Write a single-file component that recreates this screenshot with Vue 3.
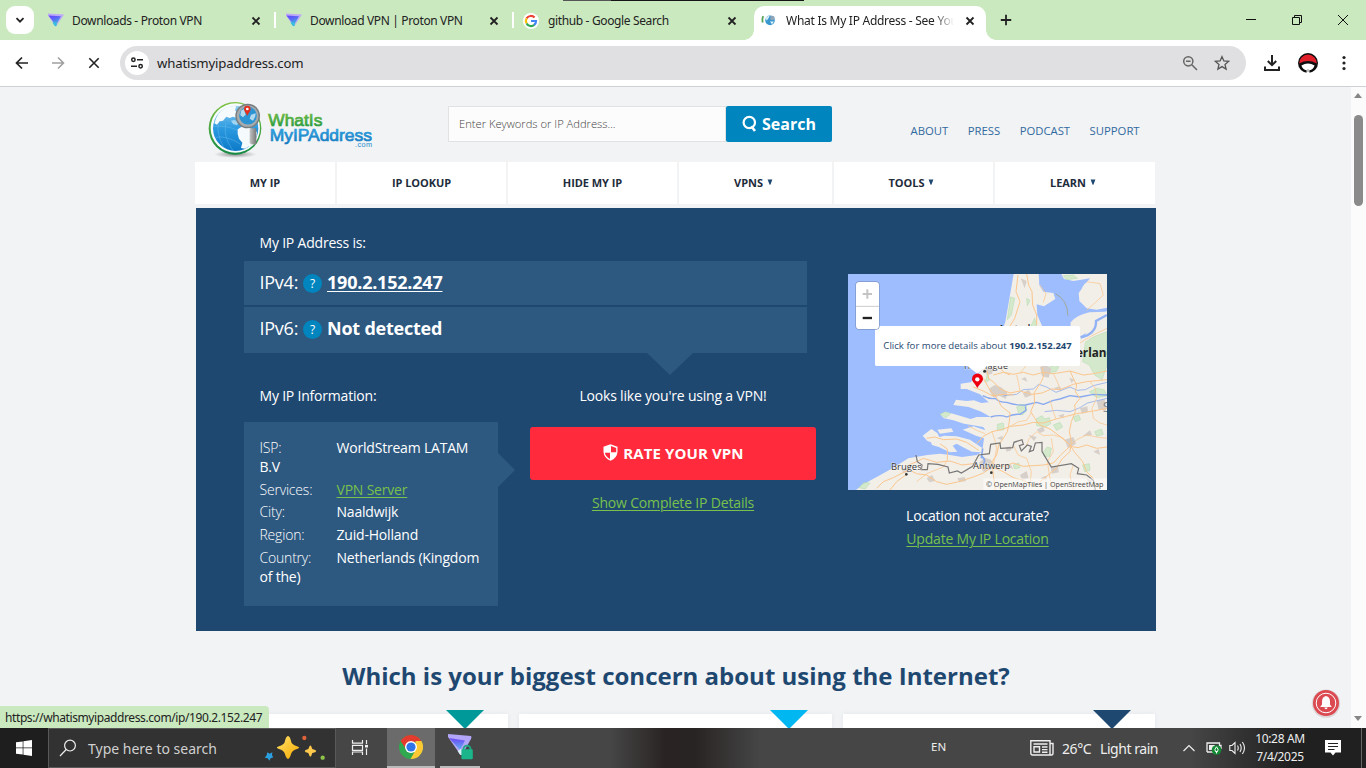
<script setup>
const tabs = [
  { title: 'Downloads - Proton VPN', icon: 'proton', sep: true },
  { title: 'Download VPN | Proton VPN', icon: 'proton', sep: true },
  { title: 'github - Google Search', icon: 'google' },
  { title: 'What Is My IP Address - See You', icon: 'globe', active: true },
]
const nav = [
  { label: 'MY IP' },
  { label: 'IP LOOKUP' },
  { label: 'HIDE MY IP' },
  { label: 'VPNS', menu: true },
  { label: 'TOOLS', menu: true },
  { label: 'LEARN', menu: true },
]
const links = ['ABOUT', 'PRESS', 'PODCAST', 'SUPPORT']
const info = [
  { key: 'ISP:', value: 'WorldStream LATAM B.V' },
  { key: 'Services:', value: 'VPN Server', link: true },
  { key: 'City:', value: 'Naaldwijk' },
  { key: 'Region:', value: 'Zuid-Holland' },
  { key: 'Country:', value: 'Netherlands (Kingdom of the)' },
]
const cards = ['teal', 'sky', 'navy']
</script>

<template>
  <div class="screen">
    <div class="tabstrip">
      <div class="edge-line"></div>
      <button class="tab-search">
        <svg width="10" height="10" viewBox="0 0 10 10"><path d="M1.5 3.2 5 6.7 8.5 3.2" fill="none" stroke="#222" stroke-width="1.8" /></svg>
      </button>
      <div v-for="t in tabs" :key="t.title" class="tab" :class="{ active: t.active, sep: t.sep }">
        <svg v-if="t.icon === 'proton'" class="fav" viewBox="0 0 16 16">
          <defs>
            <linearGradient id="pv" x1="0" y1="0" x2="0.5" y2="1"><stop offset="0" stop-color="#6440fb" /><stop offset=".5" stop-color="#5a6cf5" /><stop offset="1" stop-color="#2fc6d4" /></linearGradient>
          </defs>
          <path d="M1 .4 17 1.4 9.5 12.8Q8.5 13.8 7.8 12.6L1 2.4Z" fill="#bda9f7" />
          <path d="M1.5 2.6 14 3.2 8.8 12Z" fill="url(#pv)" />
          <path d="M8.2 9 10 12Q8.5 14.4 7.4 12.6L5.4 9.4Z" fill="#35bfe0" />
        </svg>
        <svg v-else-if="t.icon === 'google'" class="fav" viewBox="0 0 16 16">
          <circle cx="8" cy="8" r="8" fill="#fff" />
          <path d="M3.6 5.4A5 5 0 0 1 11.6 4.6" fill="none" stroke="#ea4335" stroke-width="2.2" />
          <path d="M3.6 10.5A5 5 0 0 1 3.6 5.4" fill="none" stroke="#fbbc05" stroke-width="2.2" />
          <path d="M11.4 11.8A5 5 0 0 1 3.6 10.4" fill="none" stroke="#34a853" stroke-width="2.2" />
          <path d="M8 8H13A5 5 0 0 1 11.2 11.9" fill="none" stroke="#4285f4" stroke-width="2.2" />
        </svg>
        <svg v-else class="fav" viewBox="0 0 16 16">
          <path d="M2.2 3.2Q.8 6.5 1.8 9.5" fill="none" stroke="#59a557" stroke-width="1.8" />
          <circle cx="9" cy="7.4" r="4.8" fill="#3b98cf" />
          <path d="M4.4 5 7.6 2.8 8.6 3.5 6.6 6.5 5.6 7.5Z" fill="#d8ecf7" />
          <circle cx="11.4" cy="5" r="2.3" fill="#8ea6b8" />
          <path d="M9 8.4 12.8 8.4 11 11.2Z" fill="#e4f2fa" />
        </svg>
        <span class="tab-title">{{ t.title }}</span>
        <svg class="tab-x" width="16" height="16" viewBox="0 0 16 16"><path d="M4.5 4.5 11.5 11.5M11.5 4.5 4.5 11.5" stroke="#222" stroke-width="1.8" /></svg>
      </div>
      <svg class="plus" width="12" height="12" viewBox="0 0 12 12"><path d="M6 .8V11.2M.8 6H11.2" stroke="#222" stroke-width="1.8" /></svg>
      <div class="win">
        <svg width="12" height="12" viewBox="0 0 12 12"><path d="M1 5.5H11" stroke="#111" /></svg>
        <svg width="12" height="12" viewBox="0 0 12 12"><path d="M1.5 3.5H8.5V10.5H1.5ZM3.5 3.5V1.5H10.5V8.5H8.5" fill="none" stroke="#111" /></svg>
        <svg width="12" height="12" viewBox="0 0 12 12"><path d="M1 1 11 11M11 1 1 11" stroke="#111" /></svg>
      </div>
    </div>

    <div class="toolbar">
      <svg class="back" width="14" height="14" viewBox="0 0 14 14"><path d="M13 7H1.8M7 1.5 1.5 7 7 12.5" fill="none" stroke="#222" stroke-width="1.7" /></svg>
      <svg class="fwd" width="14" height="14" viewBox="0 0 14 14"><path d="M1 7H12.2M7 1.5 12.5 7 7 12.5" fill="none" stroke="#a0a0a0" stroke-width="1.6" /></svg>
      <svg class="stop" width="12" height="12" viewBox="0 0 12 12"><path d="M1.3 1.3 10.7 10.7M10.7 1.3 1.3 10.7" stroke="#222" stroke-width="1.6" /></svg>
      <div class="omnibox">
        <span class="site">
          <svg width="14" height="14" viewBox="0 0 14 14" fill="none" stroke="#222" stroke-width="1.5"><circle cx="3.4" cy="3.8" r="1.7" /><path d="M7 3.8H13M1 10.2H7" /><circle cx="10.6" cy="10.2" r="1.7" /></svg>
        </span>
        <span class="url">whatismyipaddress.com</span>
        <svg class="mag" width="16" height="16" viewBox="0 0 16 16" fill="none" stroke="#666" stroke-width="1.5"><circle cx="6.3" cy="6.3" r="4.6" /><path d="M9.8 9.8 15 15M4 6.3H8.6" /></svg>
        <svg class="star" width="16" height="16" viewBox="0 0 16 16"><path d="M8 1.7 9.9 6 14.6 6.4 11 9.5 12.1 14.1 8 11.6 3.9 14.1 5 9.5 1.4 6.4 6.1 6Z" fill="none" stroke="#555" stroke-width="1.3" /></svg>
      </div>
      <svg class="dl" width="18" height="18" viewBox="0 0 18 18" fill="none" stroke="#222" stroke-width="2"><path d="M9 1V11M4.8 7 9 11.2 13.2 7M2 12.5V16H16V12.5" /></svg>
      <svg class="avatar" width="20" height="20" viewBox="0 0 20 20">
        <circle cx="10" cy="10" r="10" fill="#0e0e10" />
        <path d="M1.2 10.4A8.8 8.8 0 0 1 18.8 10.4Q10 5.6 1.2 10.4Z" fill="#e01f2b" />
        <path d="M3.4 12.4Q10 8.4 16.6 12.4A7 7 0 0 1 11.4 17.2V20H8.6V17.2A7 7 0 0 1 3.4 12.4Z" fill="#fff" />
        <path d="M10 16.2V19" stroke="#0e0e10" stroke-width=".5" />
      </svg>
      <svg class="dots" width="4" height="16" viewBox="0 0 4 16" fill="#222"><circle cx="2" cy="2.5" r="1.6" /><circle cx="2" cy="8" r="1.6" /><circle cx="2" cy="13.5" r="1.6" /></svg>
    </div>

    <div class="viewport">
      <div class="page">
        <header class="head">
          <svg class="logo" width="170" height="60" viewBox="50 30 510 180">
            <defs>
              <linearGradient id="ring" x1="0" y1="0" x2="0" y2="1"><stop offset="0" stop-color="#7fc243" /><stop offset="1" stop-color="#168a43" /></linearGradient>
              <linearGradient id="sea" x1="0" y1="0" x2="0" y2="1"><stop offset="0" stop-color="#8fcdf2" /><stop offset=".5" stop-color="#2b9ae0" /><stop offset="1" stop-color="#0d7ac8" /></linearGradient>
              <linearGradient id="gt" x1="0" y1="0" x2="0" y2="1"><stop offset="0" stop-color="#7cc043" /><stop offset="1" stop-color="#14923e" /></linearGradient>
              <linearGradient id="bt" x1="0" y1="0" x2="0" y2="1"><stop offset="0" stop-color="#37a9e4" /><stop offset="1" stop-color="#1277bf" /></linearGradient>
              <linearGradient id="handle" x1="0" y1="0" x2="1" y2="0"><stop offset="0" stop-color="#c4c4c4" /><stop offset="1" stop-color="#777" /></linearGradient>
              <radialGradient id="shade"><stop offset="0" stop-color="#888" /><stop offset="1" stop-color="#999" stop-opacity="0" /></radialGradient>
            </defs>
            <ellipse cx="135" cy="193" rx="64" ry="11" fill="url(#shade)" />
            <circle cx="134" cy="115" r="79" fill="url(#ring)" />
            <circle cx="135" cy="114" r="74" fill="#f7fbfd" />
            <circle cx="136" cy="115" r="68" fill="url(#sea)" />
            <path d="M84 72Q98 54 120 49L138 48 134 60 142 72 140 84 128 80 118 84 108 80 98 92 88 94 80 104 72 100Q76 84 84 72Z" fill="#f5fafd" />
            <path d="M122 92 132 90 146 96 140 106 128 102Z" fill="#9ed4f4" />
            <path d="M142 118 154 110 178 114 200 126Q200 152 182 166L164 176 152 174 156 158 146 146 142 132Z" fill="#f5fafd" />
            <path d="M72 110Q100 104 140 120M84 100Q78 130 100 172M106 100Q98 140 128 182M76 142Q110 136 150 162" fill="none" stroke="#6fbdec" stroke-width="1.3" />
            <circle cx="172" cy="78" r="37" fill="#777d80" /><circle cx="172" cy="78" r="32.5" fill="#a6abad" /><circle cx="173" cy="77" r="26.5" fill="#2c94d3" />
            <path d="M152 62 162 56 166 74 158 82 150 76ZM182 74 196 70Q196 84 188 92L178 86Z" fill="#b3d9ef" />
            <path d="M171 77C165 66 161 63 161 57A10 10 0 0 1 181 57C181 63 176 67 171 77Z" fill="#e2301e" /><circle cx="171" cy="57" r="4" fill="#fff" />
            <path d="M178 115H198V162Q188 166 178 160Z" fill="url(#handle)" />
            <text x="234" y="109" textLength="162" lengthAdjust="spacingAndGlyphs" font-size="52" fill="url(#gt)" stroke="url(#gt)" stroke-width="2.2" class="brand">WhatIs</text>
            <text x="238" y="153" textLength="307" lengthAdjust="spacingAndGlyphs" font-size="52" fill="url(#bt)" stroke="url(#bt)" stroke-width="2.2" class="brand">MyIPAddress</text>
            <text x="494" y="171" textLength="51" font-size="22" fill="#258bcb" class="brand">.com</text>
          </svg>
          <div class="search">
            <div class="field">Enter Keywords or IP Address...</div>
            <button class="go">
              <svg width="15" height="18" viewBox="0 0 15 18"><circle cx="7.3" cy="7.5" r="5.7" fill="none" stroke="#fff" stroke-width="2.2" /><path d="M9.3 11.2 13 16" stroke="#fff" stroke-width="2.6" /></svg>
              <span>Search</span>
            </button>
          </div>
          <div class="links"><a v-for="l in links" :key="l">{{ l }}</a></div>
        </header>

        <nav class="nav">
          <div v-for="n in nav" :key="n.label" class="nav-item"><span>{{ n.label }}</span><svg v-if="n.menu" width="6" height="6" viewBox="0 0 6 6"><path d="M.6.4H5.4L3.4 5.8H2.6Z" fill="#1f4871" /></svg></div>
        </nav>

        <section class="hero">
          <div class="left">
            <p class="label">My IP Address is:</p>
            <div class="bar"><span class="ver">IPv4:</span><i class="help">?</i><b class="ip v4">190.2.152.247</b></div>
            <div class="bar second"><span class="ver">IPv6:</span><i class="help">?</i><b class="ip">Not detected</b></div>
            <div class="lower">
              <div class="col-info">
                <p class="label">My IP Information:</p>
                <div class="info">
                  <p v-for="r in info" :key="r.key"><span class="key">{{ r.key }}</span><span :class="{ lnk: r.link }">{{ r.value }}</span></p>
                </div>
              </div>
              <div class="col-vpn">
                <p class="looks">Looks like you're using a VPN!</p>
                <button class="rate">
                  <svg width="15" height="17" viewBox="0 0 15 17"><path d="M7.5.3 14.5 2.8V8Q14 14 7.5 16.8Q1 14 .5 8V2.8Z" fill="#fff" /><path d="M8 2 13.2 3.9V8.2H8ZM7 8.7V15Q2.6 12.8 1.9 8.7Z" fill="#ff2b3c" /></svg>
                  <span>RATE YOUR VPN</span>
                </button>
                <a class="lnk details">Show Complete IP Details</a>
              </div>
            </div>
          </div>

          <div class="right">
            <svg class="map" width="259" height="216" viewBox="24 27 777 648">
              <rect x="24" y="27" width="777" height="648" fill="#9dbdff" />
              <path d="M521 27H801V675H48L66 660 110 636 160 608 205 580 262 570 300 566 330 570 366 576 410 570 424 562 396 560 372 548 350 536 338 542 352 560 330 562 296 546 276 540 270 524 312 512 350 514 390 524 428 550 432 520 408 512 368 494 400 484 436 496 430 486 372 476 340 466 312 460 300 448 316 440 352 450 392 462 410 456 452 456 424 440 386 426 340 420 348 404 380 408 402 406 424 414 446 412 420 388 380 372 362 372 362 356 392 352 430 310 472 240 496 170 510 90Z" fill="#f2eee8" />
              <path d="M248 512 274 492 292 504 300 520 280 534 262 528ZM292 494 334 490 340 500 300 506Z" fill="#f2eee8" />
              <path d="M596 27H664L672 42 700 48 724 44 750 40 732 62 716 84 718 108 740 130 770 134 801 128V138L770 150 744 196 730 218 700 206 640 204 606 182 592 150 590 118 612 124 646 102 640 84 610 80 598 60Z" fill="#9dbdff" />
              <path d="M722 80Q730 50 756 46L801 50V122L762 126 730 116ZM692 172Q710 150 748 142L796 140 768 166 746 200 716 216 690 204Z" fill="#f2eee8" />
              <path d="M722 218Q770 206 768 168L801 150" fill="none" stroke="#92b2f6" stroke-width="7" />
              <path d="M646 86Q682 104 684 152" fill="none" stroke="#a3a898" stroke-width="3" />
              <g fill="#cde9c6" stroke="#9bd49a" stroke-width="1.5" opacity=".8">
                <path d="M512 96 524 100 514 150 502 164ZM500 200 516 186 508 240 496 270ZM736 232 760 216 801 200V300L786 344 764 330 748 300 728 290ZM620 310 644 300 656 306 648 320 630 322ZM588 462 606 452 614 462 628 458 632 476 616 486 590 482ZM530 426 540 418 558 420 560 436 548 450 536 444ZM610 560 622 546 634 550 630 574 612 574ZM748 380 770 370 792 374 801 392 770 398ZM442 326 448 346 436 352ZM728 600 748 596 750 616 734 620ZM472 478 490 474 492 494 472 496ZM572 184 584 160 590 184ZM300 448 316 440 332 446 318 458ZM56 668 72 652 90 654 76 672ZM670 32 700 30 712 40 680 44ZM560 100 570 106 562 122ZM640 480 660 472 668 486 650 496ZM700 456 716 450 722 464 706 470ZM520 600 536 594 540 608 524 612ZM764 500 784 492 790 508 770 514Z" />
              </g>
              <g fill="#d7cfc9">
                <path d="M446 372 464 360 482 366 502 382 498 402 478 392 460 398ZM436 310 462 306 456 326 440 330ZM560 268 590 256 600 280 570 290ZM600 306 618 298 634 312 626 338 606 334ZM416 594 434 578 452 584 472 606 450 614 430 620ZM548 384 566 374 576 390 556 398ZM674 524 700 516 708 536 684 550ZM590 494 610 484 614 498 600 504ZM542 40 560 48 554 70ZM728 514 750 496 756 510ZM770 408 794 402 798 436 776 434ZM632 606 654 602 656 622 636 626ZM540 630 560 618 566 640 546 644ZM184 612 212 604 214 620 190 624ZM260 640 276 630 286 648 268 652ZM720 430 742 424 744 440 726 446Z" />
                <path d="M496 548 512 544 514 556 500 560ZM470 520 488 512 488 526ZM566 510 590 516 582 528ZM352 640 374 636 378 648 358 652ZM640 370 660 364 666 378ZM688 338 704 344 694 354ZM600 640 618 632 620 644ZM498 604 512 598 520 612ZM654 452 672 446 670 460ZM760 560 776 552 780 570ZM544 342 556 336 562 350ZM740 640 758 648 748 658Z" />
              </g>
              <g fill="none" stroke="#88a9ef" stroke-width="4" stroke-linejoin="round">
                <path d="M428 392Q450 404 466 400 476 412 500 412 530 422 556 420L590 412 610 418 640 406 660 402 690 392 720 396 760 388 801 390M452 456Q480 448 500 456 520 446 540 448L558 436 556 424" />
                <path d="M490 392 530 388 550 374 580 372 596 358 620 366 648 382 690 366 712 376 736 374 760 362 801 352M614 440 650 436 690 440 720 428 742 414 801 400" stroke-width="2.2" />
                <path d="M424 572Q440 586 430 598M428 550 424 580" stroke-width="5" />
              </g>
              <g fill="none" stroke="#fbc78d" stroke-width="3" stroke-linejoin="round">
                <path d="M534 30 528 80 540 110 524 160 500 200M560 27 566 60 576 80 578 120 590 150 590 180M442 318 446 340 466 356 480 372 510 384 540 378 576 388 606 384 634 372 660 374 700 358 740 350 801 344M460 330 490 322 520 328 550 322 580 330 610 322 640 326 690 318 730 330 760 326 801 318M480 310 492 322 510 330M606 306 612 330 604 350 582 384 584 412 572 440 586 462 600 480 630 492 660 514 690 540 704 562 728 590 740 620 760 640M430 340 448 372 474 404 484 424 510 444 508 470 502 500 490 520 476 540 470 570 456 590 460 630 466 675" />
                <path d="M400 366 430 378 456 392 490 388 520 390M410 536 430 514 456 500 484 494 512 484 550 480 580 472 610 474 648 462 680 454 710 446 760 438 801 430M690 318 700 340 710 360 706 380 720 400 704 420 706 440 694 470 688 500 694 530 690 560 668 580 648 610 620 634 600 650M300 536 322 552 322 584M260 520 284 516 310 524 350 522 380 532 416 556M206 600 230 590 250 580 290 592 330 588 366 600 400 596 430 612 456 606 490 604 520 594 550 604 580 602 610 600 640 594 664 568 690 544 714 548 740 540 770 550 801 546M110 670 130 650 160 638 206 614 230 626 260 630 290 650 320 658 356 650 400 636 430 624 456 606M456 606 490 620 520 638 550 646 580 664M150 675 170 650 200 628" />
                <path d="M456 500 464 524 470 550 460 600M750 350 766 370 770 400 756 430 760 460 780 474 801 480M690 300 700 270 710 240 736 224 760 210 801 190M600 60 618 86 610 112M740 136 760 118 790 90 780 56 740 50M230 650 260 626 310 606 322 584M560 540 568 520 590 500 610 512 640 510 668 518 690 540M510 484 536 470 560 466 576 440M690 540 714 522 740 510 770 516 801 520M384 482 410 496 436 506M540 324 552 310 560 300M634 520 640 560 622 590 630 640 640 675M520 540 534 570 560 580 574 620 570 660M700 600 690 630 700 675M640 326 652 350 660 374M630 406 640 440 648 462M530 330 536 356 540 378" stroke-width="2.2" />
              </g>
              <path d="M228 570 232 590 246 600 244 614 262 614 264 596 294 598 324 606 328 624 352 618 364 624 398 604 416 570 448 566 452 538 480 534 482 550 518 548 522 532 546 524 550 538 538 542 544 558 562 540 574 544 568 560 580 556 586 534 606 532 606 560 634 606 694 596 716 610 712 626 740 630 760 646 766 675" fill="none" stroke="#777" stroke-width="3.6" />
              <text x="477" y="208" textLength="128" lengthAdjust="spacingAndGlyphs" class="mapname" font-size="36">Amsterdam</text>
              <text x="620" y="276" textLength="202" lengthAdjust="spacingAndGlyphs" class="mapname" font-size="36">Netherland</text>
              <text x="368" y="311" textLength="136" class="maptown" font-size="27">The Hague</text>
              <text x="153" y="616" textLength="92" lengthAdjust="spacingAndGlyphs" class="maptown" font-size="28">Bruges</text>
              <text x="399" y="612" textLength="111" lengthAdjust="spacingAndGlyphs" class="maptown" font-size="28">Antwerp</text>
              <text x="788" y="440" class="mapgrey" font-size="44">S</text>
              <circle cx="434" cy="319" r="4.5" fill="#333" /><circle cx="199" cy="628" r="4" fill="#333" /><circle cx="454" cy="623" r="4" fill="#333" />
              <rect x="430" y="640" width="371" height="35" fill="#fff" opacity=".5" />
              <text x="438" y="666" textLength="352" lengthAdjust="spacingAndGlyphs" class="attr" font-size="23">© OpenMapTiles | OpenStreetMap</text>
              <path d="M382 302 412 326 442 302Z" fill="#fff" />
              <path d="M412 369C405 355 396 350 396 342A16 16 0 0 1 429 342C429 351 419 356 412 369Z" fill="#ee0010" /><circle cx="412" cy="343" r="6.5" fill="#fff" />
              <rect x="105" y="183" width="615" height="120" rx="5" fill="#fff" />
              <text x="130" y="251" textLength="370" lengthAdjust="spacingAndGlyphs" class="pop" font-size="28">Click for more details about</text>
              <text x="508" y="251" textLength="187" lengthAdjust="spacingAndGlyphs" class="pop strong" font-size="28">190.2.152.247</text>
              <rect x="46" y="49" width="73" height="145" rx="12" fill="#7c94c4" />
              <rect x="48" y="51" width="69" height="141" rx="10" fill="#fff" />
              <path d="M48 124H117" stroke="#ccc" stroke-width="3" />
              <path d="M82 73V101M68 87H96" stroke="#c4c4c4" stroke-width="6" />
              <path d="M68 159H96" stroke="#222" stroke-width="7" />
            </svg>
            <p class="loc">Location not accurate?</p>
            <a class="lnk upd">Update My IP Location</a>
          </div>
        </section>

        <h2 class="concern">Which is your biggest concern about using the Internet?</h2>
        <div class="cards"><div v-for="c in cards" :key="c" class="card" :class="c"></div></div>
      </div>

      <div class="scroll"><i class="up"></i><i class="thumb"></i><i class="down"></i></div>
      <div class="status">https://whatismyipaddress.com/ip/190.2.152.247</div>
      <svg class="bell" width="32" height="32" viewBox="0 0 32 32">
        <circle cx="16" cy="16.6" r="14.2" fill="#c9babc" opacity=".5" /><circle cx="16" cy="16" r="13" fill="#dc4a51" /><circle cx="16" cy="16" r="9.8" fill="none" stroke="#fff" stroke-width="1" />
        <path d="M16 9Q20.2 9.8 20 15V17.5L21.8 20H10.2L12 17.5V15Q11.8 9.8 16 9ZM14.3 20.6H17.7Q17.2 22.3 16 22.3T14.3 20.6Z" fill="#fff" />
      </svg>
    </div>

    <div class="taskbar">
      <div class="start"><svg width="16" height="16" viewBox="0 0 16 16" fill="#fff"><path d="M0 2.3 6.7 1.4V7.6H0ZM7.4 1.3 16 0V7.6H7.4ZM0 8.3H6.7V14.6L0 13.7ZM7.4 8.3H16V16L7.4 14.7Z" /></svg></div>
      <div class="tsearch">
        <svg width="18" height="18" viewBox="0 0 18 18" fill="none" stroke="#eee" stroke-width="1.2"><circle cx="11" cy="6.6" r="5.4" /><path d="M7.2 10.5 1 17" /></svg>
        <span>Type here to search</span>
        <svg class="sparkles" width="62" height="26" viewBox="0 0 186 78">
          <defs><linearGradient id="gold" x1="0" y1="0" x2="1" y2="1"><stop offset="0" stop-color="#ffe36a" /><stop offset="1" stop-color="#f6a800" /></linearGradient></defs>
          <path d="M72 3Q78 3 82 22Q85 30 99 34Q112 38 99 42Q85 46 82 55Q77 72 72 72Q67 72 62 55Q59 46 45 42Q32 38 45 34Q59 30 62 22Q66 3 72 3Z" fill="url(#gold)" />
          <path d="M139 31Q142 33 145 42Q156 45 157 48Q156 52 145 54Q142 64 139 65Q136 64 133 54Q123 52 122 48Q123 45 133 42Q136 33 139 31Z" fill="#ffc94d" />
          <circle cx="121" cy="9" r="6.5" fill="#e0633a" /><circle cx="176" cy="68" r="6.5" fill="#8fc34a" />
          <path d="M10 52 17 56 25 52 24 61 28 67 20 70 16 77 11 70 2 68 8 61Z" fill="#2ba0e0" />
        </svg>
      </div>
      <div class="tview"><svg width="18" height="18" viewBox="0 0 18 18" fill="none" stroke="#eee" stroke-width="1.2"><path d="M1.5 1V4.2H11.5V1M1.5 16V13H11.5V16M1.5 6.3H11.5V11.3H1.5ZM15.5 1V5M15.5 9.5V16" /><path d="M14 7.2H17" stroke-width="2.6" /></svg></div>
      <div class="app chrome">
        <svg width="24" height="24" viewBox="0 0 24 24">
          <circle cx="12" cy="12" r="12" fill="#2fa84f" />
          <path d="M1.6 6A12 12 0 0 1 22.4 6L12 7.5 7.2 14.6Z" fill="#e33b2e" />
          <path d="M22.4 6A12 12 0 0 1 11.5 24L16.6 15V6Z" fill="#fcc934" />
          <circle cx="12" cy="12" r="6" fill="#fff" /><circle cx="12" cy="12" r="4.6" fill="#2f74e8" />
        </svg>
      </div>
      <div class="app pv">
        <svg width="26" height="26" viewBox="0 0 26 26">
          <defs><linearGradient id="pb" x1="0" y1="0" x2="0" y2="1"><stop offset="0" stop-color="#6f46f4" /><stop offset="1" stop-color="#5fb4f4" /></linearGradient></defs>
          <path d="M1 0 24 2Q25 3.2 24 5L15.5 20Q14 22 12.5 19.5L1 3Z" fill="#b3a5f7" /><path d="M2 4 18 6.4 13 16Z" fill="url(#pb)" /><path d="M10.6 17 13.6 15 17 17 15 20.4Q13.8 22 12.4 19.8Z" fill="#dceef6" />
          <path d="M16.6 16V14A3.6 3.6 0 0 1 23.4 14V16" fill="none" stroke="#1fa985" stroke-width="1.8" /><rect x="14.4" y="15.3" width="11.4" height="10" rx="1.2" fill="#1bb58b" />
        </svg>
      </div>
      <div class="grow"></div>
      <span class="lang">EN</span>
      <svg class="news" width="24" height="16" viewBox="0 0 24 16" fill="none" stroke="#eee" stroke-width="1.4"><path d="M.8.8H20V15H2.5Q.8 15 .8 13ZM20 3.5H23V13.5Q23 15 21.4 15H20M3.5 4H17.5" /><path d="M4 6.8H9.5V12H4ZM12 7H17.5M12 9.6H17.5M12 12.2H17.5" /></svg>
      <span class="deg">26°C</span><span class="rain">Light rain</span>
      <svg class="chev" width="12" height="8" viewBox="0 0 12 8"><path d="M.5 7 6 1.5 11.5 7" fill="none" stroke="#eee" stroke-width="1.2" /></svg>
      <svg class="batt" width="16" height="14" viewBox="0 0 16 14"><path d="M1 11V2H13.5V4.5H15V8M1 11H9" stroke="#eee" fill="none" stroke-width="1.3" /><rect x="3" y="4" width="6" height="5" fill="#eee" /><circle cx="10.5" cy="9" r="4.8" fill="#158a35" /><path d="M10.5 5.8Q13.2 8.6 11.5 10.6H9.5Q7.8 8.6 10.5 5.8ZM10.5 10V12.4" fill="none" stroke="#fff" /></svg>
      <svg class="vol" width="17" height="14" viewBox="0 0 17 14" fill="none" stroke="#eee" stroke-width="1.1"><path d="M.8 4.5H3L6 1.5V12.5L3 9.5H.8ZM8.5 4.5Q10 7 8.5 9.5M11 3Q13.4 7 11 11M13.4 1Q17.6 7 13.4 13" /></svg>
      <div class="clock"><span>10:28 AM</span><span>7/4/2025</span></div>
      <svg class="action" width="16" height="16" viewBox="0 0 16 16"><path d="M0 0H16V12.5H10.5L8 15.5 5.5 12.5H0Z" fill="#fff" /><path d="M3 3.5H13M3 6.5H13M3 9.5H9.5" stroke="#222" /></svg>
      <i class="peek"></i>
    </div>
  </div>
</template>

<style>
html, body { margin: 0; overflow: hidden; }
</style>

<style scoped>
* { box-sizing: border-box; }
p, h2 { margin: 0; }
svg { display: block; flex: none; }
button { border: 0; padding: 0; font: inherit; }
.screen { width: 1366px; height: 768px; display: flex; flex-direction: column; font-family: "Open Sans", "Noto Sans", sans-serif; overflow: hidden; white-space: nowrap; }

.tabstrip { height: 40px; flex: none; background: #cae9bf; display: flex; position: relative; }
.edge-line { position: absolute; left: 563px; top: 0; width: 241px; height: 1px; background: linear-gradient(90deg, #555 20%, #151515 20%); }
.tab-search { margin: 6px 4px 0 6px; width: 28px; height: 28px; border-radius: 9px; background: #fff; display: grid; place-items: center; }
.tab { width: 238px; height: 40px; padding: 1px 12px 0 9px; display: flex; align-items: center; position: relative; font-family: "Noto Sans", sans-serif; font-size: 12px; color: #222; }
.tab.sep::after { content: ""; position: absolute; right: 0; top: 12px; width: 2px; height: 16px; background: #fff; }
.tab.active::before { content: ""; position: absolute; left: 2px; width: 232px; top: 6px; bottom: 0; background: #fff; border-radius: 10px 10px 0 0; }
.tab.active::after { content: ""; position: absolute; left: -8px; width: 252px; bottom: 0; height: 10px; background: radial-gradient(circle at 0 0, transparent 9.5px, #fff 10px) 0 0 / 10px 10px no-repeat, radial-gradient(circle at 100% 0, transparent 9.5px, #fff 10px) 100% 0 / 10px 10px no-repeat; }
.tab > * { position: relative; }
.fav { width: 16px; height: 16px; margin-right: 9px; overflow: visible; }
.tab-title { width: 168px; overflow: hidden; letter-spacing: -0.36px; }
.active .tab-title { letter-spacing: -0.27px; mask-image: linear-gradient(90deg, #000 88%, transparent 100%); }
.tab-x { margin-left: 8px; }
.plus { margin: 14px 0 0 10px; }
.win { display: flex; gap: 34px; margin: 14px 0 0 auto; padding-right: 17px; }

.toolbar { height: 47px; flex: none; background: #fff; border-bottom: 1px solid #cfcfd6; display: flex; align-items: center; padding-left: 15px; }
.fwd { margin-left: 22px; }
.stop { margin-left: 23px; }
.omnibox { margin-left: 20px; width: 1126px; height: 34px; border-radius: 17px; background: #e0e0e2; display: flex; align-items: center; padding-left: 5px; }
.site { width: 24px; height: 24px; border-radius: 50%; background: #fff; display: grid; place-items: center; }
.url { margin-left: 8px; font-family: "Noto Sans", sans-serif; font-size: 13.2px; letter-spacing: -0.17px; color: #222; flex: 1; }
.star { margin: 0 16px; }
.dl { margin-left: 17px; }
.avatar { margin-left: 17px; }
.dots { margin-left: 24px; }

.viewport { height: 641px; flex: none; position: relative; background: #f1f3f5; overflow: hidden; }
.page { width: 960px; margin-left: 196px; }
.head { height: 75px; display: flex; }
.logo { margin: 13px 0 0 11px; }
.brand { font-family: "Liberation Sans", sans-serif; }
.search { display: flex; margin: 19px 0 0 71px; width: 384px; height: 36px; flex: none; }
.field { width: 278px; border: 1px solid #e2e2e2; background: #fcfcfc; padding-left: 10px; line-height: 34px; font-size: 11.2px; font-weight: 300; color: #444; }
.go { width: 106px; background: #0085be; border-radius: 2px; display: flex; align-items: center; justify-content: center; gap: 5px; color: #fff; font-weight: 700; font-size: 16px; }
.links { display: flex; margin: 36px 0 0 78.5px; gap: 19.5px; font-size: 11.3px; line-height: 16px; color: #336a9f; font-weight: 500; }
.nav { display: grid; grid-template-columns: 140px 169px 169px 153px 159px 160px; column-gap: 2px; height: 42px; margin-left: -1px; }
.nav-item { background: #fff; display: flex; align-items: center; justify-content: center; gap: 4px; padding: 0 4px 2px 0; font-weight: 700; font-size: 11px; letter-spacing: -0.05px; color: #1e2c3c; }
.nav-item:nth-child(-n+3) { padding-right: 0; }

.hero { margin-top: 4px; height: 423px; background: #1f4871; color: #fff; display: flex; padding: 0 49px 0 48px; font-size: 14px; font-weight: 500; letter-spacing: -0.2px; }
.left { width: 563px; padding-top: 25px; }
.label { padding-left: 15.5px; line-height: 20px; }
.bar { margin-top: 8px; height: 44px; background: #2d587f; display: flex; align-items: center; padding: 0 0 2px 15.5px; font-size: 18px; }
.bar.second { margin-top: 2px; height: 46px; padding-bottom: 4px; position: relative; }
.bar.second::after { content: ""; position: absolute; left: 402.5px; top: 46px; border: 23.5px solid transparent; border-top: 22px solid #2d587f; border-bottom: 0; }
.ver { width: 43.5px; font-weight: 400; letter-spacing: -0.25px; }
.help { width: 19px; height: 19px; border-radius: 50%; background: #0085be; font-style: normal; font-size: 12px; display: grid; place-items: center; position: relative; top: 1px; }
.ip { margin-left: 5px; letter-spacing: -0.22px; }
.v4 { text-decoration: underline; text-underline-offset: 2px; text-decoration-thickness: 1px; }
.lower { display: flex; margin-top: 33px; }
.col-info { width: 254px; }
.info { position: relative; margin-top: 16px; height: 184px; background: #2d587f; padding: 16px 16px 0 15.5px; white-space: normal; }
.info::after { content: ""; position: absolute; left: 254px; top: 31px; border: 17.5px solid transparent; border-left: 17px solid #2d587f; border-right: 0; }
.info p { line-height: 19px; margin-bottom: 3.7px; width: 228px; }
.key { display: inline-block; width: 77px; font-weight: 300; }
.lnk { color: #77c14c; text-decoration: underline; text-underline-offset: 2px; text-decoration-thickness: 1px; }
.col-vpn { margin-left: 32px; width: 286px; flex: none; display: flex; flex-direction: column; align-items: center; }
.looks { line-height: 20px; }
.rate { margin-top: 21px; padding: 0 0 2px 1px; width: 286px; height: 53px; border-radius: 3px; background: #ff2b3c; color: #fff; display: flex; align-items: center; justify-content: center; gap: 5px; font-weight: 700; font-size: 15px; letter-spacing: 0.1px; }
.details { margin-top: 13px; line-height: 20px; letter-spacing: -0.17px; }
.right { margin-left: 41px; width: 259px; padding-top: 66px; display: flex; flex-direction: column; align-items: center; }
.map { letter-spacing: 0; }
.loc { margin-top: 16px; line-height: 20px; }
.upd { margin-top: 3px; line-height: 20px; }
.mapname { font-weight: 700; fill: #222; }
.maptown { fill: #333; stroke: #fff; stroke-width: 2px; paint-order: stroke; }
.mapgrey { fill: #888; }
.attr { fill: #444; font-weight: 400; }
.pop { fill: #1f4871; font-weight: 400; }
.pop.strong { font-weight: 700; }
.concern { margin-top: 28px; line-height: 34px; text-align: center; font-size: 24px; font-weight: 700; color: #1f4871; }
.cards { margin: 21px 0 0 -1px; display: grid; grid-template-columns: 313px 313px 312px; column-gap: 11px; }
.card { height: 40px; background: #fff; position: relative; box-shadow: 0 0 4px #e3e5e8; }
.card::before { content: ""; position: absolute; left: 251px; top: -4px; border: 19px solid transparent; border-bottom: 0; }
.teal::before { border-top-color: #009999; }
.sky::before { border-top-color: #00b7f1; }
.navy::before { border-top-color: #1f4871; left: 250px; }

.scroll { position: absolute; right: 0; top: 0; width: 15px; height: 641px; background: #fbfbfc; }
.scroll i { position: absolute; left: 3px; }
.up { top: 6px; border: 4.5px solid transparent; border-bottom: 5px solid #868686; border-top: 0; }
.down { bottom: 7px; border: 4.5px solid transparent; border-top: 5px solid #868686; border-bottom: 0; }
.thumb { top: 28px; width: 9px; height: 91px; border-radius: 5px; background: #8a8a8a; }
.status { position: absolute; left: 0; bottom: 0; width: 269px; height: 22px; background: #cae9bf; border-radius: 0 4px 0 0; padding-left: 5px; font: 12px/24px "Noto Sans", sans-serif; letter-spacing: -0.4px; color: #222; }
.bell { position: absolute; left: 1310px; top: 600px; }

.taskbar { height: 40px; flex: none; display: flex; align-items: center; color: #eee; font-family: "Noto Sans", sans-serif; background: linear-gradient(90deg, #464646 610px, #292423 665px, #282423 695px, #464646 760px, #464646 1190px, #202020 1290px); }
.start { width: 48px; height: 40px; background: #1e1e1e; display: grid; place-items: center; }
.tsearch { width: 288px; height: 40px; background: #323232; border: 1px solid #595959; display: flex; align-items: center; padding-left: 10px; font-size: 14px; color: #d0d0d0; }
.tsearch span { margin-left: 11px; width: 176px; }
.tview { width: 51px; padding-left: 15px; }
.app { width: 48px; height: 40px; border-bottom: 2px solid #bbb; display: grid; place-items: center; }
.chrome { background: #6b6b6b; }
.pv { width: 40px; margin-left: 5px; }
.grow { flex: 1; }
.lang { font-size: 11.5px; width: 16px; margin: 0 83px 4px 0; }
.deg { margin-left: 8px; font-size: 14px; width: 38px; letter-spacing: -0.4px; }
.rain { font-size: 14px; width: 58px; letter-spacing: -0.45px; }
.chev { margin-left: 25px; }
.batt { margin-left: 11px; }
.vol { margin-left: 7px; }
.clock { width: 60px; margin-left: 4px; display: flex; flex-direction: column; align-items: center; font-size: 12px; line-height: 18px; letter-spacing: -0.35px; }
.action { margin-left: 15px; }
.peek { width: 1px; height: 40px; background: #666; margin: 0 4px 0 20px; }
</style>
